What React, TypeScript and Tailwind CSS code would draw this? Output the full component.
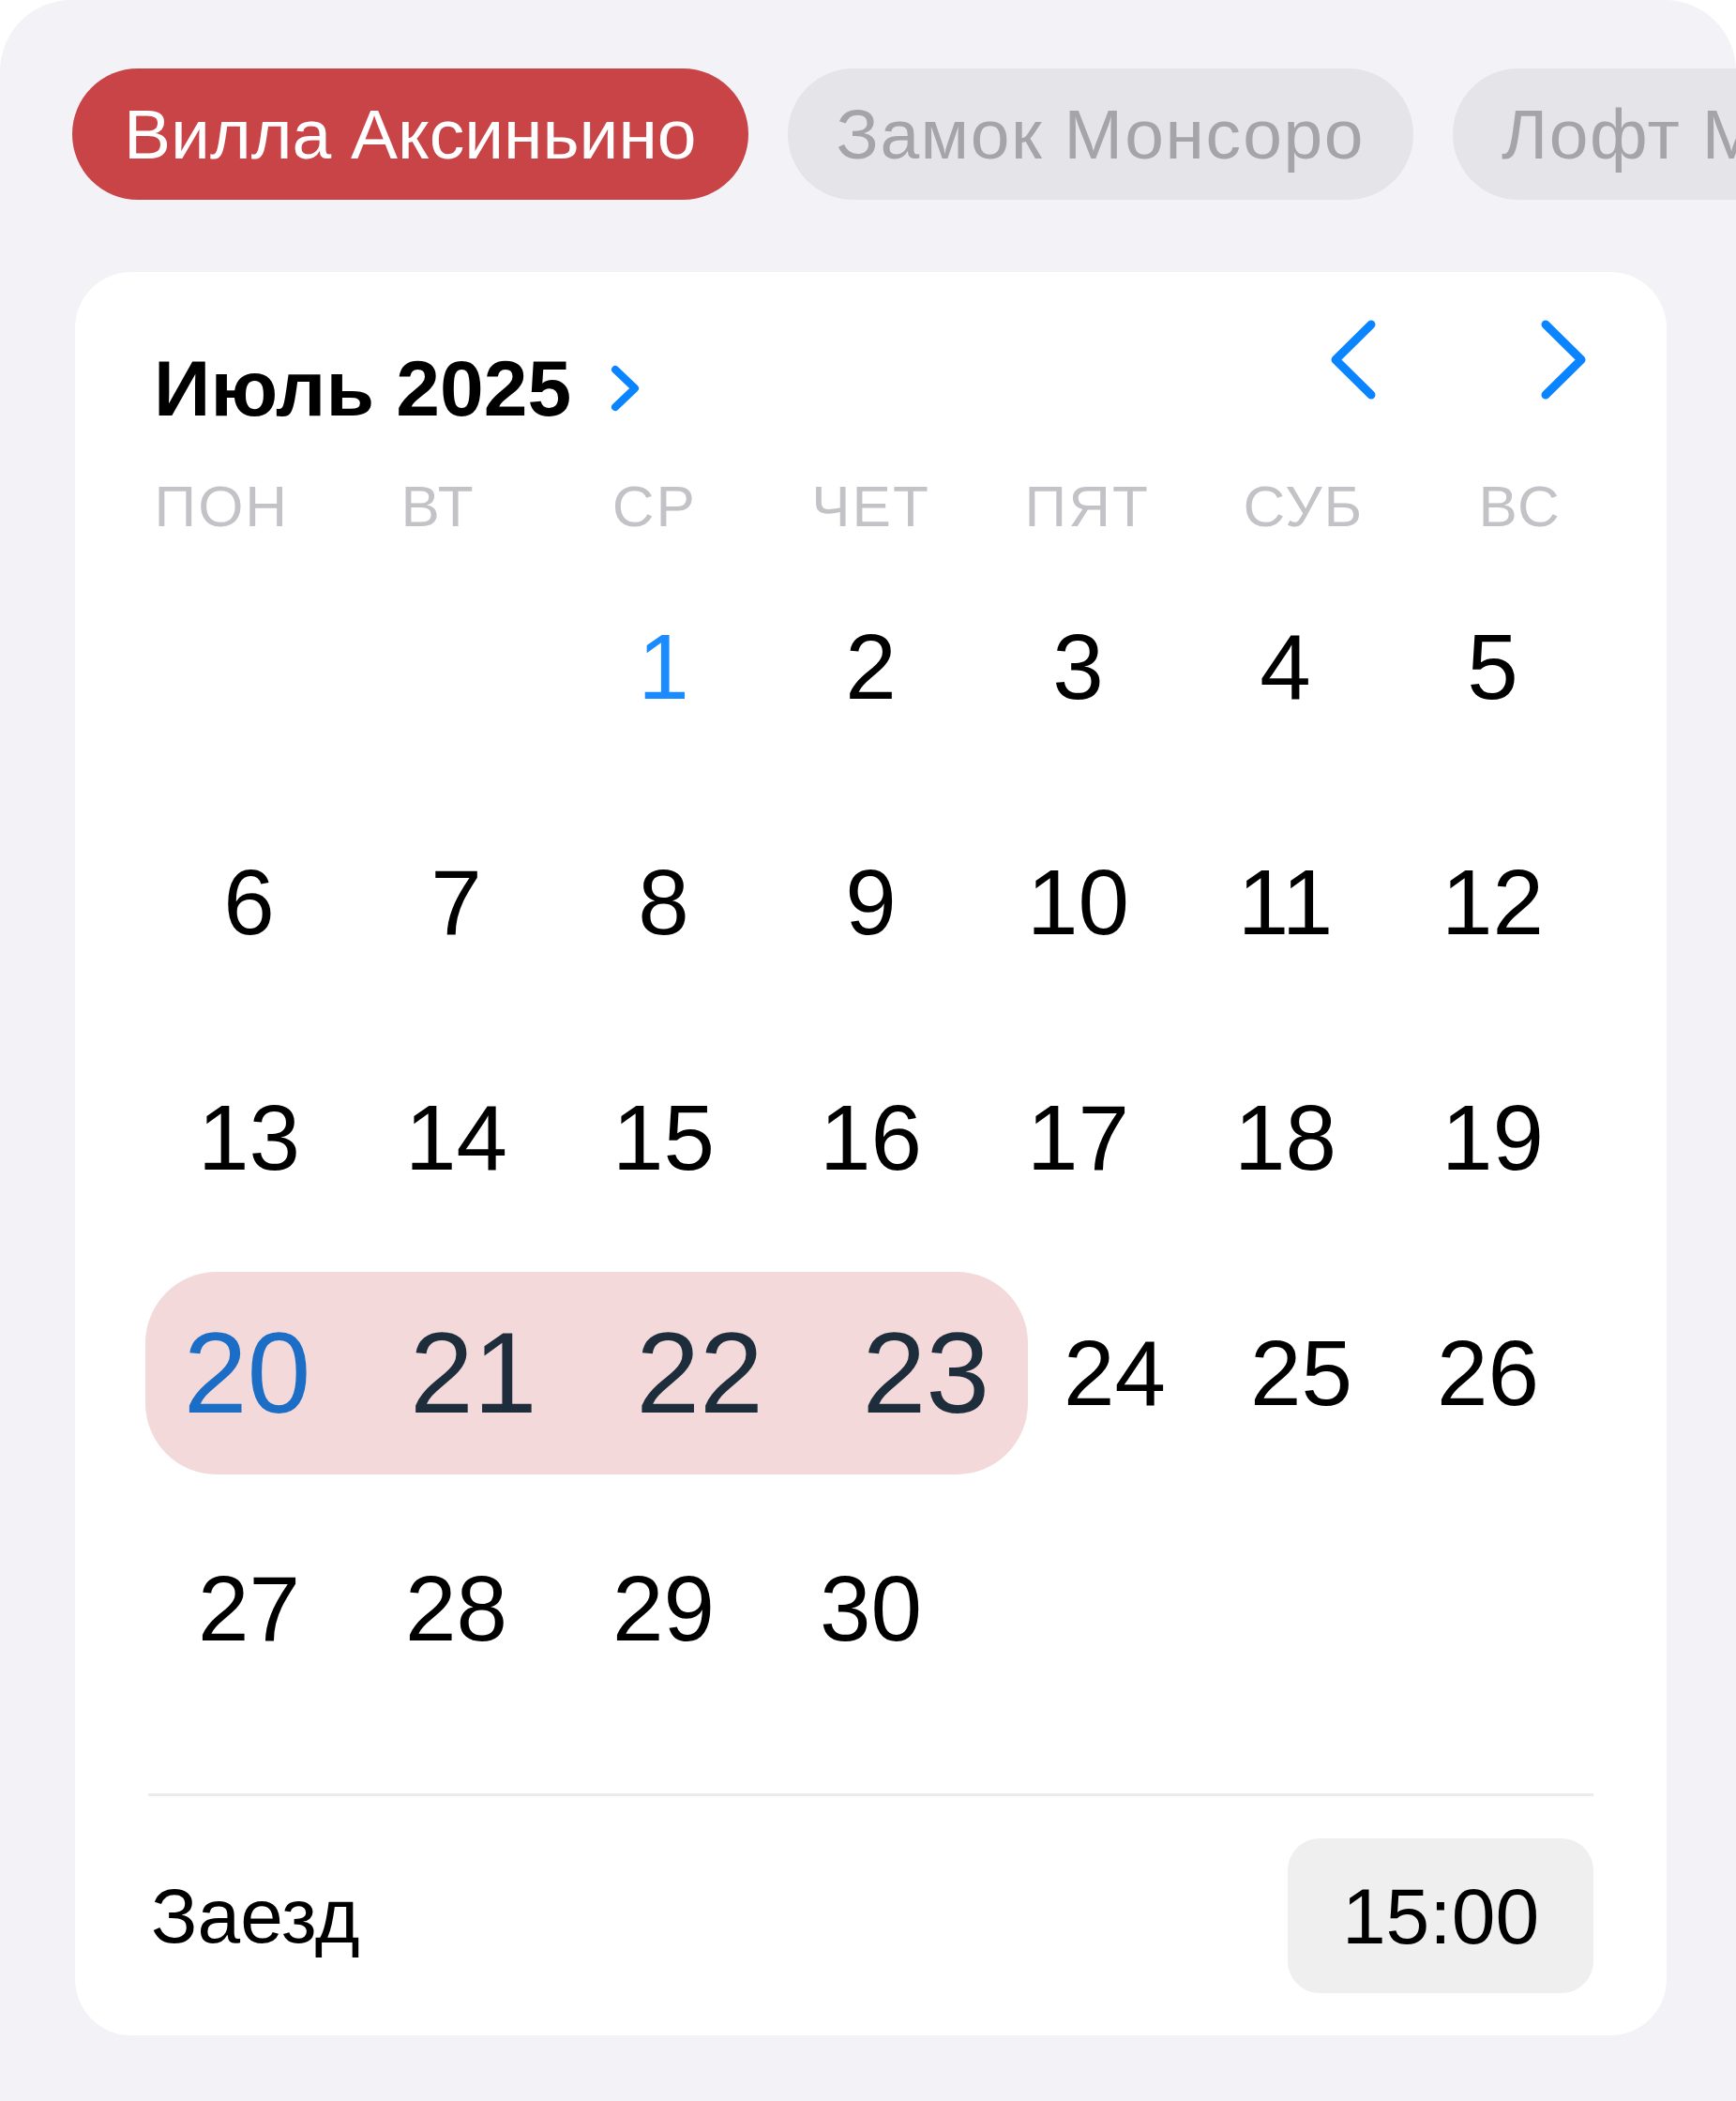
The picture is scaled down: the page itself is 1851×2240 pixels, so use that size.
import React from "react";

type Venue = { id: string; name: string };

const venues: Venue[] = [
  { id: "aksinino", name: "Вилла Аксиньино" },
  { id: "monsoro", name: "Замок Монсоро" },
  { id: "loft", name: "Лофт Москва" },
];

const weekdays = ["ПОН", "ВТ", "СР", "ЧЕТ", "ПЯТ", "СУБ", "ВС"];

const weeks: (number | null)[][] = [
  [null, null, 1, 2, 3, 4, 5],
  [6, 7, 8, 9, 10, 11, 12],
  [13, 14, 15, 16, 17, 18, 19],
  [20, 21, 22, 23, 24, 25, 26],
  [27, 28, 29, 30, null, null, null],
];

const today = 1;
const rangeStart = 20;
const rangeEnd = 23;

const Chevron: React.FC<{ dir: "left" | "right"; className?: string }> = ({ dir, className }) => (
  <svg width="51" height="87" viewBox="0 0 51 87" className={className} fill="none">
    <polyline
      points={dir === "left" ? "45,6 7,43.5 45,81" : "6,6 44,43.5 6,81"}
      stroke="#0a84ff"
      strokeWidth="9"
      strokeLinecap="round"
      strokeLinejoin="round"
    />
  </svg>
);

const VenueTabs: React.FC<{ active: string }> = ({ active }) => (
  <div className="flex gap-[42px] overflow-hidden whitespace-nowrap pl-[77px]">
    {venues.map((v) => (
      <button
        key={v.id}
        className={
          v.id === active
            ? "flex h-[140px] shrink-0 items-center rounded-full bg-[#c94446] px-[55px] text-[75px] leading-none text-white"
            : "flex h-[140px] shrink-0 items-center rounded-full bg-[#e4e4e9] px-[52px] text-[75px] leading-none tracking-[1.5px] text-[#a4a4a9]"
        }
      >
        {v.name}
      </button>
    ))}
  </div>
);

const DayCell: React.FC<{ day: number | null; className?: string }> = ({ day, className }) => (
  <div className={"flex h-[251px] items-center justify-center " + (className ?? "")}>
    {day !== null && (
      <span className={"text-[98px] leading-none " + (day === today ? "text-[#1a8cff]" : "text-black")}>
        {day}
      </span>
    )}
  </div>
);

const SelectedWeek: React.FC<{ week: (number | null)[] }> = ({ week }) => {
  const inRange = week.filter((d) => d !== null && d >= rangeStart && d <= rangeEnd) as number[];
  const rest = week.filter((d) => d !== null && d > rangeEnd) as number[];

  return (
    <div className="flex h-[251px] items-center">
      <div className="flex h-[216px] w-[941px] items-center rounded-[76px] bg-[#f4d9da]">
        <div className="-mx-[12px] flex flex-1">
          {inRange.map((d) => (
            <div key={d} className="flex flex-1 justify-center">
              <span
                className={
                  "text-[122px] leading-none " + (d === rangeStart ? "text-[#1b6dc6]" : "text-[#1e2d3b]")
                }
              >
                {d}
              </span>
            </div>
          ))}
        </div>
      </div>
      <div className="-ml-[7px] flex">
        {rest.map((d) => (
          <DayCell key={d} day={d} className="w-[199px]" />
        ))}
      </div>
    </div>
  );
};

export default function App() {
  return (
    <div className="h-[2240px] w-[1851px] bg-white font-['Liberation_Sans',Arial,sans-serif]">
      <div className="h-full rounded-t-[76px] bg-[#f2f2f7] pt-[73px]">
        <VenueTabs active="aksinino" />

        <div className="ml-[80px] mt-[77px] w-[1697px] rounded-[60px] bg-white pb-[45px] pt-[50px]">
          {/* month header */}
          <div className="flex items-start justify-between px-[84px]">
            <div className="mt-[32px] flex h-[84px] items-center">
              <span className="text-[84px] font-bold leading-none text-black">Июль 2025</span>
              <svg width="33" height="50" viewBox="0 0 33 50" className="ml-[41px]" fill="none">
                <polyline
                  points="6,5 27,25 6,45"
                  stroke="#0a84ff"
                  strokeWidth="8"
                  strokeLinecap="round"
                  strokeLinejoin="round"
                />
              </svg>
            </div>
            <div className="flex gap-[174px]">
              <button>
                <Chevron dir="left" />
              </button>
              <button>
                <Chevron dir="right" />
              </button>
            </div>
          </div>

          {/* weekday labels */}
          <div className="mx-[41px] mt-[53px] grid h-[62px] grid-cols-7">
            {weekdays.map((w) => (
              <div key={w} className="text-center text-[62px] leading-none tracking-[2px] text-[#c3c3c7]">
                {w}
              </div>
            ))}
          </div>

          {/* days */}
          <div className="mx-[75px] mt-[14px]">
            {weeks.map((week, i) =>
              week.includes(rangeStart) ? (
                <SelectedWeek key={i} week={week} />
              ) : (
                <div key={i} className="grid grid-cols-7">
                  {week.map((d, j) => (
                    <DayCell key={j} day={d} />
                  ))}
                </div>
              )
            )}
          </div>

          <div className="mx-[78px] mt-[72px] h-[3px] bg-[#ebebed]" />

          {/* check-in time */}
          <div className="mx-[78px] mt-[45px] flex items-center justify-between">
            <span className="pl-[3px] text-[82px] leading-none text-black">Заезд</span>
            <div className="flex h-[165px] w-[326px] items-center justify-center rounded-[34px] bg-[#efeff0] text-[84px] leading-none text-black">
              15:00
            </div>
          </div>
        </div>
      </div>
    </div>
  );
}
